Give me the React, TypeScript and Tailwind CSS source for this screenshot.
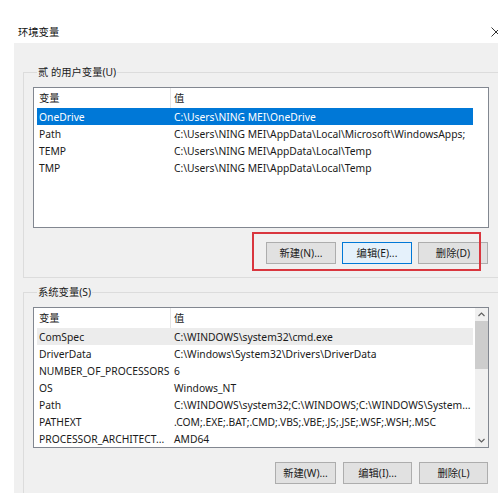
const userVars = [
  { name: "OneDrive", value: "C:\\Users\\NING MEI\\OneDrive" },
  { name: "Path", value: "C:\\Users\\NING MEI\\AppData\\Local\\Microsoft\\WindowsApps;" },
  { name: "TEMP", value: "C:\\Users\\NING MEI\\AppData\\Local\\Temp" },
  { name: "TMP", value: "C:\\Users\\NING MEI\\AppData\\Local\\Temp" },
];

const systemVars = [
  { name: "ComSpec", value: "C:\\WINDOWS\\system32\\cmd.exe" },
  { name: "DriverData", value: "C:\\Windows\\System32\\Drivers\\DriverData" },
  { name: "NUMBER_OF_PROCESSORS", value: "6" },
  { name: "OS", value: "Windows_NT" },
  { name: "Path", value: "C:\\WINDOWS\\system32;C:\\WINDOWS;C:\\WINDOWS\\System..." },
  { name: "PATHEXT", value: ".COM;.EXE;.BAT;.CMD;.VBS;.VBE;.JS;.JSE;.WSF;.WSH;.MSC" },
  { name: "PROCESSOR_ARCHITECT...", value: "AMD64" },
];

type Row = { name: string; value: string };

function VarList({ rows, selected, hovered, scroll }: { rows: Row[]; selected?: number; hovered?: number; scroll?: boolean }) {
  return (
    <div className="flex h-[141px] w-[456px] border border-[#828790] bg-white">
      <div className="flex w-[439px] shrink-0 flex-col overflow-hidden pl-[3px]">
        <div className="flex h-[20px] shrink-0 items-center">
          <div className="h-full w-[134px] shrink-0 border-r border-[#e5e5e5] pl-[2px] leading-[20px]">变量</div>
          <div className="pl-[3px]">值</div>
        </div>
        {rows.map((r, i) => (
          <div
            key={i}
            className={
              "flex h-[17px] shrink-0 items-center whitespace-nowrap " +
              (i === selected ? "bg-[#0078d7] text-white" : i === hovered ? "bg-[#ececec]" : "")
            }
          >
            <div className="w-[134px] shrink-0 overflow-hidden pl-[2px]">{r.name}</div>
            <div className="shrink-0 pl-[3px]">{r.value}</div>
          </div>
        ))}
      </div>
      {scroll && (
        <div className="ml-auto flex w-[13px] flex-col items-center bg-[#f0f0f0]">
          <svg width="9" height="13" viewBox="0 0 9 13" className="shrink-0">
            <path d="M1.5 8 L4.5 5 L7.5 8" fill="none" stroke="#606060" strokeWidth="1.2" />
          </svg>
          <div className="h-[48px] w-full bg-[#cdcdcd]" />
          <div className="flex-1" />
          <svg width="9" height="13" viewBox="0 0 9 13" className="shrink-0">
            <path d="M1.5 5 L4.5 8 L7.5 5" fill="none" stroke="#606060" strokeWidth="1.2" />
          </svg>
        </div>
      )}
    </div>
  );
}

function Btn({ label, focus, w = "w-[70px]" }: { label: string; focus?: boolean; w?: string }) {
  return (
    <div
      className={
        "flex h-[22px] items-center justify-center border " +
        w +
        (focus ? " border-[#0078d7] bg-[#e5f1fb]" : " border-[#adadad] bg-[#e1e1e1]")
      }
    >
      {label}
    </div>
  );
}

export default function App() {
  return (
    <div
      className="relative flex h-[493px] w-[498px] flex-col overflow-hidden bg-white text-[10.3px] leading-[16px] text-[#1a1a1a]"
      style={{ fontFamily: "'Noto Sans', 'Noto Sans CJK SC', sans-serif" }}
    >
      <div className="relative h-[43px] shrink-0 pl-[18px] pt-[24px] text-[#111]">
        环境变量
        <svg className="absolute left-[491px] top-[27px]" width="10" height="10" viewBox="0 0 10 10">
          <path d="M0.5 0.5 L9.5 9.5 M9.5 0.5 L0.5 9.5" stroke="#333" strokeWidth="1" />
        </svg>
      </div>

      <div className="ml-[14px] flex flex-1 flex-col bg-[#f0f0f0] pl-[9px] pt-[21px]">
        <fieldset className="w-[482px] shrink-0 border border-[#dcdcdc] pb-[13px] pl-[9px] pt-[7px]">
          <legend className="ml-[4px] px-[1px]">贰 的用户变量(U)</legend>
          <VarList rows={userVars} selected={0} />
          <div className="mt-[14px] flex w-[456px] justify-end gap-[6px] pr-[1px]">
            <Btn label="新建(N)..." />
            <Btn label="编辑(E)..." focus />
            <Btn label="删除(D)" />
          </div>
        </fieldset>

        <fieldset className="mt-[6px] w-[482px] shrink-0 border border-[#dcdcdc] pb-[20px] pl-[9px] pt-[7px]">
          <legend className="ml-[4px] px-[1px]">系统变量(S)</legend>
          <VarList rows={systemVars} hovered={0} scroll />
          <div className="mt-[14px] flex w-[456px] justify-end gap-[7px] pr-[1px]">
            <Btn label="新建(W)..." w="w-[61px]" />
            <Btn label="编辑(I)..." w="w-[69px]" />
            <Btn label="删除(L)" w="w-[69px]" />
          </div>
        </fieldset>
      </div>

      <div className="absolute left-[252px] top-[232px] h-[39px] w-[229px] border-2 border-[#d9363e]" />
    </div>
  );
}
